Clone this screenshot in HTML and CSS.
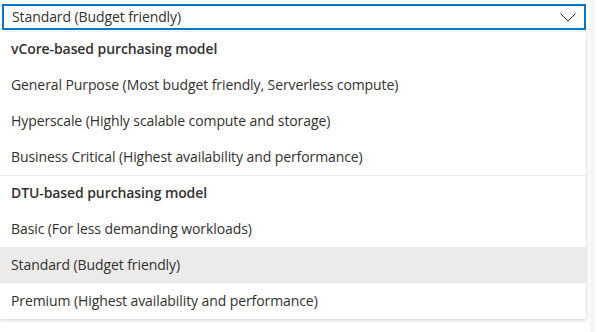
FILE: index.html
```html
<!DOCTYPE html>
<html lang="en">
<head>
    <meta charset="UTF-8">
    <title>Service tier</title>
    <link rel="stylesheet" href="styles.css">
</head>
<body>
    <div class="wrap">
        <div class="select">
            <span class="value">Standard (Budget friendly)</span>
            <svg class="chevron" width="16" height="9" viewBox="0 0 16 9">
                <path d="M0.5 0.5 L8 8 L15.5 0.5" fill="none" stroke="#323130" stroke-width="1"/>
            </svg>
        </div>
        <ul class="menu">
            <li class="group">vCore-based purchasing model</li>
            <li>General Purpose (Most budget friendly, Serverless compute)</li>
            <li>Hyperscale (Highly scalable compute and storage)</li>
            <li>Business Critical (Highest availability and performance)</li>
            <li class="divider"></li>
            <li class="group">DTU-based purchasing model</li>
            <li>Basic (For less demanding workloads)</li>
            <li class="active">Standard (Budget friendly)</li>
            <li>Premium (Highest availability and performance)</li>
        </ul>
    </div>
    <div class="scroll"></div>
</body>
</html>
```

FILE: styles.css
```css
*{
    margin: 0;
    padding: 0;
    box-sizing: border-box;
}
body{
    background: #fff;
    font-family: "Open Sans", "Noto Sans", sans-serif;
    font-size: 14px;
    letter-spacing: -0.09px;
    color: #323130;
    display: flex;
    padding: 4px 0 0 2px;
}
.wrap{
    width: 584px;
}
.select{
    height: 26px;
    border: 2px solid #0078d4;
    display: flex;
    align-items: center;
    justify-content: space-between;
    padding: 0 8px 0 8px;
}
.value{
    line-height: 20px;
}
.chevron{
    display: block;
}
.menu{
    list-style: none;
    margin-top: 2px;
    margin-left: -2px;
    width: 586px;
    background: #fff;
    box-shadow: 0 1px 4px rgba(0,0,0,.2);
}
.menu li{
    height: 36px;
    line-height: 36px;
    padding-left: 11px;
}
.menu .group{
    font-weight: 600;
    height: 35px;
    line-height: 33px;
}
.menu .divider{
    height: 1px;
    background: #edebe9;
}
.menu .active{
    background: #edebe9;
}
.scroll{
    width: 5px;
    height: 332px;
    margin-left: 4px;
    margin-top: -4px;
    background: #f5f5f5;
}
```
